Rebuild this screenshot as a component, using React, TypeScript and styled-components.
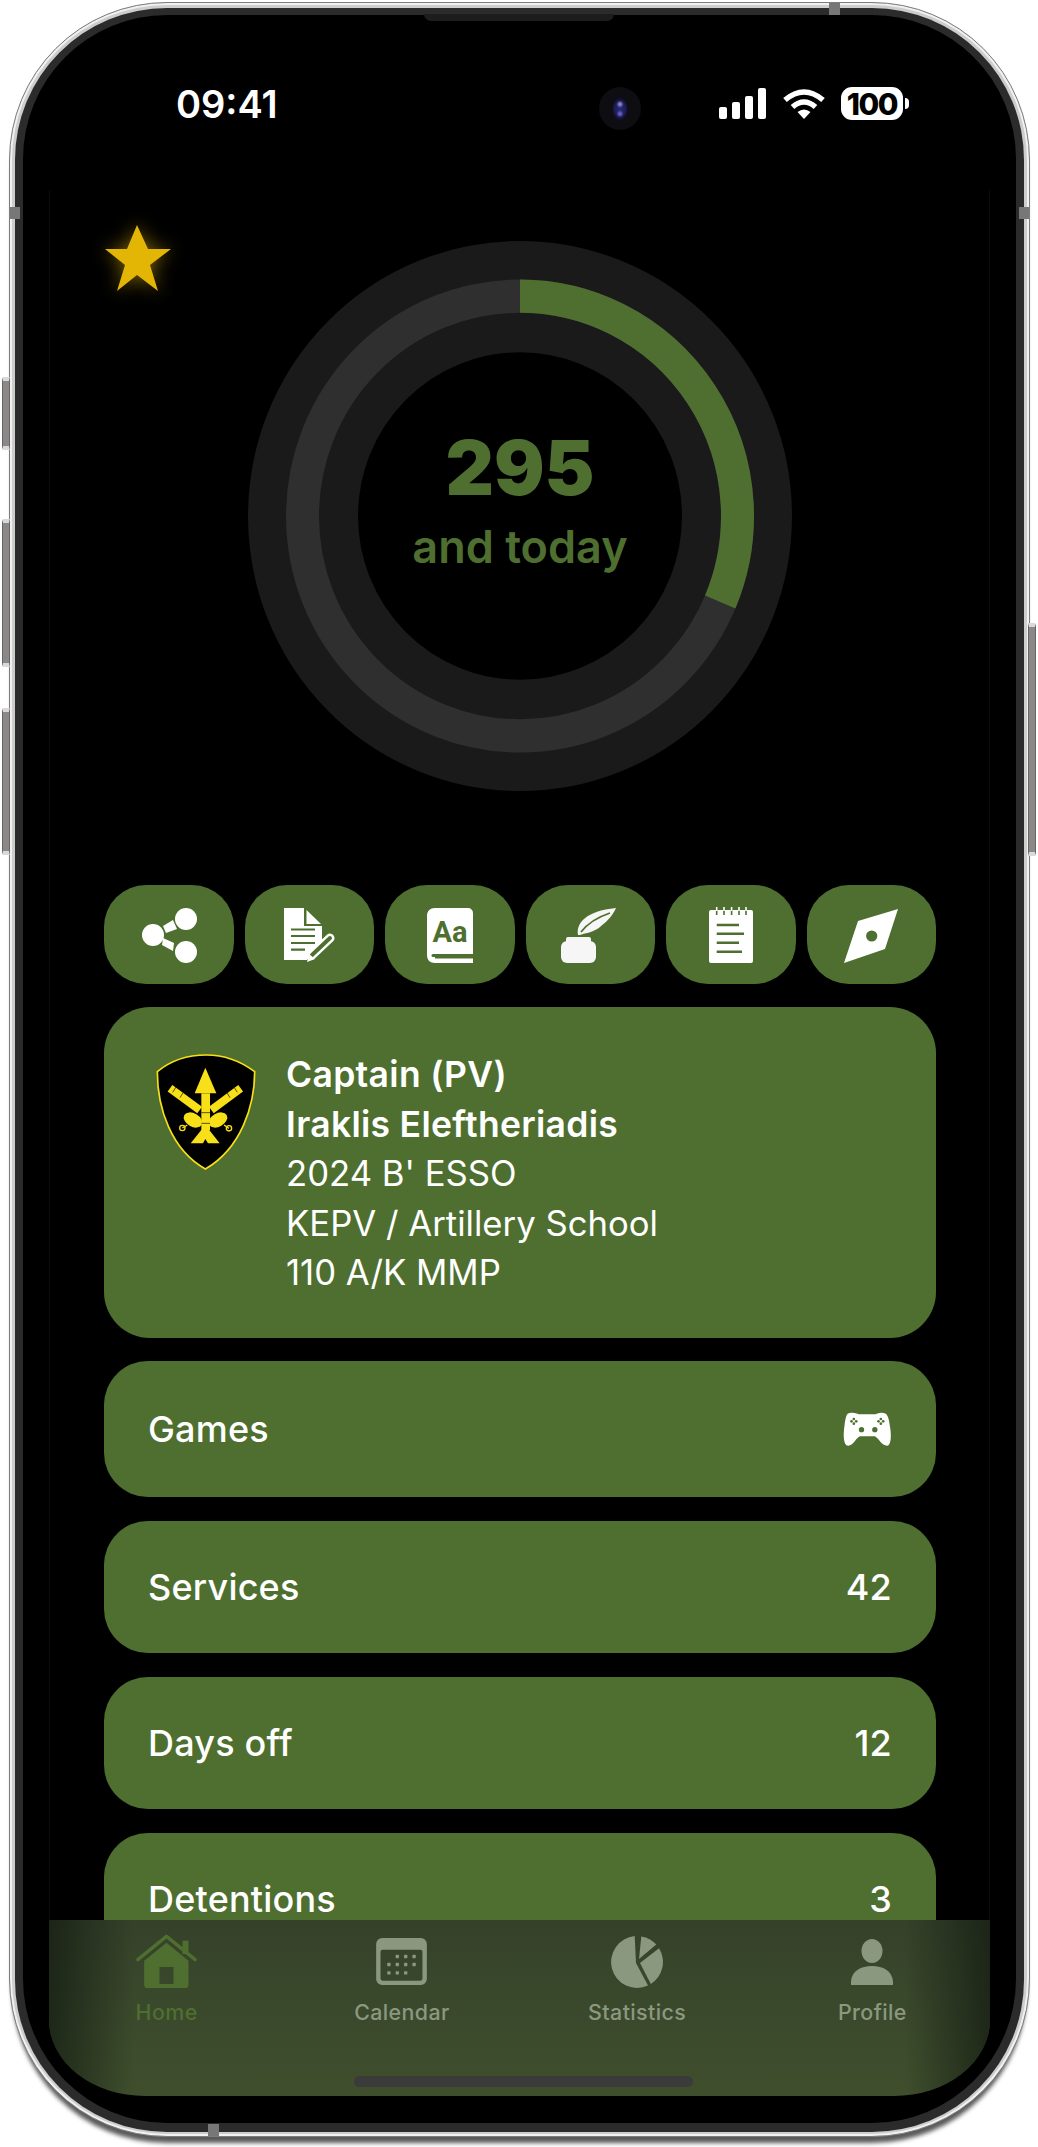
import React from "react";
import styled, { createGlobalStyle } from "styled-components";

const GREEN = "#4e6f2f";
const MUTED = "#8b9880";

const Global = createGlobalStyle`
  html, body { margin: 0; padding: 0; background: #fff; }
  body { font-family: Inter, "Noto Sans", "Liberation Sans", sans-serif; }
  * { box-sizing: border-box; }
`;

const Stage = styled.div`
  width: 1038px;
  height: 2147px;
  padding: 2px 0 0 9px;
  overflow: hidden;
  background: #fff;
`;
const Phone = styled.div`
  position: relative;
  display: flex;
  width: 1021px;
  height: 2135px;
  padding: 5px 5px 4px;
  border-radius: 158px;
  border: 1px solid #7d7d7d;
  background: #cdcdcd;
  box-shadow: inset 0 0 0 2px #f1f1f1, 0 9px 4px -3px rgba(0, 0, 0, 0.65);
`;
const Bezel = styled.div`
  flex: 1;
  display: flex;
  padding: 7px 8px 9px;
  border-radius: 152px;
  background: #2b2b2b;
`;
const Inner = styled.div`
  flex: 1;
  display: flex;
  padding: 0 26px 27px;
  border-radius: 144px;
  background: #000;
`;
const Screen = styled.div`
  position: relative;
  flex: 1;
  min-width: 0;
  display: flex;
  flex-direction: column;
  overflow: hidden;
  border-radius: 0 0 96px 96px / 0 0 76px 76px;
`;
const SideButton = styled.div<{ $top: number; $height: number; $right?: boolean }>`
  position: absolute;
  top: ${(p) => p.$top}px;
  height: ${(p) => p.$height}px;
  width: 8px;
  ${(p) => (p.$right ? "right: -7px;" : "left: -8px;")}
  background: #8c8888;
  border: 1px solid #666;
  border-top: 4px solid #d9d9d9;
  border-bottom: 4px solid #d9d9d9;
  border-radius: ${(p) => (p.$right ? "0 2px 2px 0" : "2px 0 0 2px")};
`;
const Band = styled.div<{ $side: "top" | "bottom" | "left" | "right"; $at: number }>`
  position: absolute;
  background: #777;
  ${(p) =>
    p.$side === "top" || p.$side === "bottom"
      ? `left: ${p.$at}px; width: 11px; height: 12px; ${p.$side}: 0;`
      : `top: ${p.$at}px; height: 12px; width: 10px; ${p.$side}: 0;`}
`;
const Speaker = styled.div`
  position: absolute;
  top: 11px;
  left: 414px;
  width: 190px;
  height: 7px;
  background: #1d1d1d;
  border-radius: 0 0 8px 8px;
`;
const StatusBar = styled.div`
  flex: none;
  height: 175px;
  padding: 70px 87px 0 127px;
  display: flex;
  align-items: flex-start;
  justify-content: space-between;
  color: #fff;
`;
const Time = styled.div`
  font-size: 38px;
  font-weight: 600;
  line-height: 38px;
`;
const StatusIcons = styled.div`
  display: flex;
  align-items: center;
  gap: 16px;
  padding-top: 2px;
`;
const Battery = styled.div`
  position: relative;
  width: 62px;
  height: 33px;
  display: flex;
  align-items: center;
  justify-content: center;
  border-radius: 11px;
  background: #fff;
  color: #000;
  font-size: 30px;
  font-weight: 800;
  letter-spacing: -1.5px;
  &::after {
    content: "";
    position: absolute;
    right: -6px;
    top: 11px;
    width: 4px;
    height: 11px;
    border-radius: 0 4px 4px 0;
    background: #fff;
  }
`;
const Camera = styled.div`
  position: absolute;
  left: 550px;
  top: 72px;
  width: 42px;
  height: 43px;
  border-radius: 50%;
  background: #0e0e12;
  display: flex;
  align-items: center;
  justify-content: center;
  &::after {
    content: "";
    width: 14px;
    height: 22px;
    border-radius: 50%;
    background:
      radial-gradient(circle at 50% 28%, #a59be0 0, rgba(165, 155, 224, 0) 22%),
      radial-gradient(circle at 50% 72%, #7a6fe0 0, rgba(122, 111, 224, 0) 22%),
      radial-gradient(circle, #2a2a78 0, #16164a 60%, #0d0d2a 100%);
  }
`;
const Content = styled.main`
  flex: 1;
  min-height: 0;
  overflow: hidden;
  padding: 0 53px 0 54px;
  border-left: 1px solid #0d0d0d;
  border-right: 1px solid #0d0d0d;
`;
const Hero = styled.section`
  position: relative;
  padding-top: 51px;
  margin-bottom: 94px;
  display: flex;
  justify-content: center;
`;
const Star = styled.svg`
  position: absolute;
  left: 1px;
  top: 35px;
  width: 66px;
  height: 66px;
  filter: drop-shadow(0 0 9px rgba(227, 181, 5, 0.55));
`;
const Dial = styled.div`
  position: relative;
  width: 544px;
  height: 550px;
`;
const DialLabel = styled.div`
  position: absolute;
  inset: 0;
  padding-bottom: 29px;
  display: flex;
  flex-direction: column;
  align-items: center;
  justify-content: center;
  color: ${GREEN};
`;
const DialNumber = styled.div`
  font-size: 75px;
  font-weight: 900;
  line-height: 80px;
`;
const DialCaption = styled.div`
  font-size: 45px;
  font-weight: 600;
  line-height: 56px;
  margin-top: 11px;
`;
const Stack = styled.div`
  display: flex;
  flex-direction: column;
  gap: 23px;
`;
const Actions = styled.div`
  display: grid;
  grid-template-columns: repeat(6, 1fr);
  gap: 11px;
`;
const ActionButton = styled.div`
  height: 99px;
  border-radius: 42px;
  background: ${GREEN};
  display: flex;
  align-items: center;
  justify-content: center;
`;
const IdCard = styled.section`
  height: 331px;
  padding: 43px 44px 0 55px;
  border-radius: 46px;
  background: ${GREEN};
  display: flex;
  gap: 29px;
  color: #fff;
`;
const Shield = styled.svg`
  flex: none;
  width: 120px;
  height: 135px;
  margin: -5px -11px 0 -11px;
`;
const IdLines = styled.div`
  font-size: 34.7px;
  line-height: 49.6px;
  font-weight: 400;
`;
const IdStrong = styled.div`
  font-size: 35.5px;
  font-weight: 600;
  letter-spacing: 0.3px;
`;
const Rows = styled.div`
  display: flex;
  flex-direction: column;
  gap: 24px;
`;
const Row = styled.div<{ $tall?: boolean }>`
  height: ${(p) => (p.$tall ? 136 : 132)}px;
  flex: none;
  padding: 0 44px;
  border-radius: 44px;
  background: ${GREEN};
  color: #fff;
  display: flex;
  align-items: center;
  justify-content: space-between;
  font-size: 36px;
  font-weight: 500;
  letter-spacing: 0.2px;
`;
const TabBar = styled.nav`
  position: absolute;
  left: 0;
  right: 0;
  bottom: 0;
  height: 176px;
  padding-top: 14px;
  display: grid;
  grid-template-columns: repeat(4, 1fr);
  align-items: start;
  background:
    linear-gradient(90deg, rgba(12, 18, 12, 0.62) 0, rgba(12, 18, 12, 0) 9%, rgba(12, 18, 12, 0) 91%, rgba(12, 18, 12, 0.62) 100%),
    linear-gradient(180deg, #35422a 0, #3f4f2d 100%);
`;
const Tab = styled.div<{ $active?: boolean }>`
  display: flex;
  flex-direction: column;
  align-items: center;
  color: ${(p) => (p.$active ? GREEN : MUTED)};
`;
const TabIcon = styled.div`
  height: 55px;
  display: flex;
  align-items: center;
  justify-content: center;
`;
const TabLabel = styled.div`
  margin-top: 10px;
  font-size: 21.4px;
  line-height: 26px;
  font-weight: 500;
  letter-spacing: 0.4px;
`;
const HomeIndicator = styled.div`
  position: absolute;
  left: 305px;
  bottom: 9px;
  width: 339px;
  height: 11px;
  border-radius: 6px;
  background: #3b3b3b;
`;

const ShareIcon = () => (
  <svg width="56" height="56" viewBox="0 0 56 56" fill="#fff">
    <circle cx="12" cy="28" r="11" />
    <circle cx="45" cy="12" r="11" />
    <circle cx="45" cy="45" r="11" />
    <polygon points="22,19 32,13 36,22 25,26" />
    <polygon points="22,31 33,36 32,44 21,38" />
  </svg>
);
const DocIcon = () => (
  <svg width="52" height="56" viewBox="0 0 52 56">
    <path d="M1 1H21V19H39V36L24 53H1Z" fill="#fff" />
    <path d="M23.5 3L38 17H23.5Z" fill="#fff" />
    <path d="M8 22.5H32M8 29H32M8 36H32M8 42.6H22" stroke={GREEN} strokeWidth="2.2" />
    <path d="M29 48L47 31" stroke="#fff" strokeWidth="9" strokeLinecap="round" />
    <path d="M29 48L47 31" stroke={GREEN} strokeWidth="4" strokeLinecap="round" />
    <path d="M24 55L26 47L32 52Z" fill="#fff" />
  </svg>
);
const BookIcon = () => (
  <svg width="46" height="56" viewBox="0 0 46 56">
    <path d="M8 1H41a5 5 0 0 1 5 5V50H8a3 3 0 0 0 0 1.5H46V56H8C3 56 0 53 0 48V9C0 4 3 1 8 1Z" fill="#fff" />
    <path d="M6 48.5H46" stroke={GREEN} strokeWidth="3" strokeLinecap="round" />
    <text x="23" y="35" textAnchor="middle" fontFamily="Roboto" fontWeight="700" fontSize="29" fill={GREEN}>
      Aa
    </text>
  </svg>
);
const InkIcon = () => (
  <svg width="60" height="56" viewBox="0 0 60 56">
    <rect x="1" y="34" width="35" height="22" rx="6" fill="#f6f6f6" />
    <rect x="6" y="30" width="25" height="8" rx="2" fill="#f6f6f6" />
    <path d="M18 28C16 16 26 4 56 1C52 10 46 15 40 20C34 25 26 26 20 28Z" fill="#f6f6f6" />
    <path d="M21 25C28 16 38 10 50 6" stroke={GREEN} strokeWidth="1.8" fill="none" />
  </svg>
);
const NoteIcon = () => (
  <svg width="46" height="56" viewBox="0 0 46 56">
    <rect x="1" y="3" width="44" height="53" rx="2" fill="#fff" />
    <path d="M8.7 2V8M16 2V8M23.6 2V8M31 2V8M38 2V8" stroke={GREEN} strokeWidth="1.6" />
    <path d="M8.7 18H31M8.7 26.7H36M8.7 35.7H31M8.7 44.7H34" stroke={GREEN} strokeWidth="2.6" />
    <path d="M8.7 0V4M16 0V4M23.6 0V4M31 0V4M38 0V4" stroke="#fff" strokeWidth="1.6" />
  </svg>
);
const CompassIcon = () => (
  <svg width="56" height="56" viewBox="0 0 56 56">
    <polygon points="55,2 15,14 1,56 42,42" fill="#fff" />
    <circle cx="28.7" cy="29" r="5.6" fill={GREEN} />
  </svg>
);
const ControllerIcon = () => (
  <svg width="49" height="36" viewBox="40 36 146 108">
    <path
      d="M60 42C50 42 47 55 44 80C40 105 40 140 55 140C70 140 78 118 90 112H135C147 118 155 140 172 140C185 140 185 105 180 80C177 55 172 42 160 42C150 38 142 46 130 46H95C82 46 72 38 60 42Z"
      fill="#fff"
    />
    <g fill={GREEN}>
      <circle cx="95" cy="92" r="8" />
      <circle cx="135" cy="92" r="8" />
      <circle cx="72" cy="60" r="4" />
      <circle cx="72" cy="74" r="4" />
      <circle cx="65" cy="67" r="4" />
      <circle cx="79" cy="67" r="4" />
      <circle cx="153" cy="60" r="4" />
      <circle cx="153" cy="74" r="4" />
      <circle cx="146" cy="67" r="4" />
      <circle cx="160" cy="67" r="4" />
    </g>
  </svg>
);
const HomeIcon = () => (
  <svg width="63" height="55" viewBox="30 28 188 165" fill="currentColor">
    <path d="M38 105L124 35L210 105" fill="none" stroke="currentColor" strokeWidth="10" strokeLinecap="round" strokeLinejoin="round" />
    <rect x="172" y="48" width="18" height="40" />
    <path
      fillRule="evenodd"
      d="M57 108L124 54L190 108V180a10 10 0 0 1-10 10H67a10 10 0 0 1-10-10ZM103 127V178H145V127Z"
    />
  </svg>
);
const CalendarIcon = () => (
  <svg width="51" height="47" viewBox="757 40 151 140" fill="currentColor">
    <path
      fillRule="evenodd"
      d="M775 40H890a18 18 0 0 1 18 18V162a18 18 0 0 1-18 18H775a18 18 0 0 1-18-18V58a18 18 0 0 1 18-18ZM776 75a6 6 0 0 0-6 6V161a6 6 0 0 0 6 6H889a6 6 0 0 0 6-6V81a6 6 0 0 0-6-6Z"
    />
    {[
      [820, 95], [845, 95], [870, 95],
      [795, 119], [820, 119], [845, 119], [870, 119],
      [795, 144], [820, 144], [845, 144],
    ].map(([x, y]) => (
      <rect key={`${x}-${y}`} x={x - 5} y={y - 5} width="10" height="10" rx="2" />
    ))}
  </svg>
);
const PieIcon = () => (
  <svg width="52" height="52" viewBox="-26 -26 52 52" fill="currentColor">
    <path d="M-1 1L11 23.6A26 26 0 1 1 -2.3 -25.9Z" />
    <path d="M2 -3L4.3 -25.6A26 26 0 0 1 19.3 -17.4Z" />
    <path d="M3 1L22 -13.8A26 26 0 0 1 13.8 22Z" />
  </svg>
);
const PersonIcon = () => (
  <svg width="42" height="46" viewBox="0 0 42 46" fill="currentColor">
    <ellipse cx="21" cy="12" rx="10.5" ry="12" />
    <path d="M1 46C-1 46 0 44 0 42C1 32 10 27 21 27C32 27 41 32 42 42C42 44 43 46 41 46Z" />
  </svg>
);

const YELLOW = "#f7e017";

const tabs = [
  { label: "Home", icon: <HomeIcon />, active: true },
  { label: "Calendar", icon: <CalendarIcon /> },
  { label: "Statistics", icon: <PieIcon /> },
  { label: "Profile", icon: <PersonIcon /> },
];

export default function App() {
  const cx = 272;
  const r = 217.5;
  const angle = (113 * Math.PI) / 180;
  const ex = cx + r * Math.sin(angle);
  const ey = cx - r * Math.cos(angle);
  return (
    <Stage>
      <Global />
      <Phone>
        <SideButton $top={374} $height={73} />
        <SideButton $top={516} $height={148} />
        <SideButton $top={705} $height={147} />
        <SideButton $right $top={620} $height={233} />
        <Band $side="top" $at={819} />
        <Band $side="bottom" $at={198} />
        <Band $side="left" $at={204} />
        <Band $side="right" $at={204} />
        <Speaker />
        <Bezel>
          <Inner>
            <Screen>
              <StatusBar>
                <Time>09:41</Time>
                <StatusIcons>
                  <svg width="48" height="31" viewBox="0 0 48 31" fill="#fff">
                    <rect x="0" y="19" width="8" height="12" rx="2" />
                    <rect x="13" y="14" width="8" height="17" rx="2" />
                    <rect x="26" y="8" width="8" height="23" rx="2" />
                    <rect x="39" y="0" width="8" height="31" rx="2" />
                  </svg>
                  <svg width="42" height="30" viewBox="0 0 42 30" fill="none" stroke="#fff" strokeWidth="5.5">
                    <path d="M2 11Q21 -5 40 11" />
                    <path d="M9.5 18Q21 8 32.5 18" />
                    <path d="M14.5 23Q21 18 27.5 23L21 30Z" fill="#fff" stroke="none" />
                  </svg>
                  <Battery>100</Battery>
                </StatusIcons>
              </StatusBar>
              <Camera />
              <Content>
                <Hero>
                  <Star viewBox="0 0 66 66">
                    <polygon
                      points="32,0 43,24 66,24 45,40 53,66 32,50 12,66 20,40 0,24 22,24"
                      fill="#e3b505"
                    />
                  </Star>
                  <Dial>
                    <svg width="544" height="550" viewBox="0 0 544 544" preserveAspectRatio="none">
                      <circle cx={cx} cy={cx} r="217" fill="none" stroke="#1a1a1a" strokeWidth="110" />
                      <circle cx={cx} cy={cx} r={r} fill="none" stroke="#2f2f2f" strokeWidth="33" />
                      <path
                        d={`M${cx} ${cx - r}A${r} ${r} 0 0 1 ${ex} ${ey}`}
                        fill="none"
                        stroke={GREEN}
                        strokeWidth="33"
                      />
                    </svg>
                    <DialLabel>
                      <DialNumber>295</DialNumber>
                      <DialCaption>and today</DialCaption>
                    </DialLabel>
                  </Dial>
                </Hero>
                <Stack>
                  <Actions>
                    <ActionButton><ShareIcon /></ActionButton>
                    <ActionButton><DocIcon /></ActionButton>
                    <ActionButton><BookIcon /></ActionButton>
                    <ActionButton><InkIcon /></ActionButton>
                    <ActionButton><NoteIcon /></ActionButton>
                    <ActionButton><CompassIcon /></ActionButton>
                  </Actions>
                  <IdCard>
                    <Shield viewBox="0 0 360 405">
                      <path
                        d="M28 80C70 45 120 30 175 30C230 30 280 50 320 80C320 180 280 310 172 372C70 315 28 190 28 80Z"
                        fill="#000"
                        stroke={YELLOW}
                        strokeWidth="5"
                      />
                      <g fill={YELLOW}>
                        <path d="M66 130L155 195" stroke={YELLOW} strokeWidth="24" />
                        <path d="M278 130L190 195" stroke={YELLOW} strokeWidth="24" />
                        <ellipse cx="135" cy="225" rx="30" ry="20" transform="rotate(30 135 225)" />
                        <ellipse cx="210" cy="225" rx="30" ry="20" transform="rotate(-30 210 225)" />
                        <path d="M172 68L205 145H140Z" />
                        <rect x="160" y="145" width="26" height="110" />
                        <path d="M172 240L215 295H180L172 282L165 295H128Z" />
                      </g>
                      <circle cx="103" cy="249" r="8" fill="none" stroke={YELLOW} strokeWidth="4" />
                      <circle cx="243" cy="250" r="8" fill="none" stroke={YELLOW} strokeWidth="4" />
                      <path d="M118 240L103 249M228 240L243 250" stroke={YELLOW} strokeWidth="4" />
                      <path
                        d="M160 203H186M160 235H186M84 126L74 142M106 142L96 158M258 126L268 142M236 142L246 158"
                        stroke="#3a3300"
                        strokeWidth="2.5"
                      />
                    </Shield>
                    <IdLines>
                      <IdStrong>Captain (PV)</IdStrong>
                      <IdStrong>Iraklis Eleftheriadis</IdStrong>
                      <div>2024 B' ESSO</div>
                      <div>KEPV / Artillery School</div>
                      <div>110 A/K MMP</div>
                    </IdLines>
                  </IdCard>
                  <Rows>
                    <Row $tall>
                      <span>Games</span>
                      <ControllerIcon />
                    </Row>
                    <Row>
                      <span>Services</span>
                      <span>42</span>
                    </Row>
                    <Row>
                      <span>Days off</span>
                      <span>12</span>
                    </Row>
                    <Row>
                      <span>Detentions</span>
                      <span>3</span>
                    </Row>
                  </Rows>
                </Stack>
              </Content>
              <TabBar>
                {tabs.map((t) => (
                  <Tab key={t.label} $active={t.active}>
                    <TabIcon>{t.icon}</TabIcon>
                    <TabLabel>{t.label}</TabLabel>
                  </Tab>
                ))}
                <HomeIndicator />
              </TabBar>
            </Screen>
          </Inner>
        </Bezel>
      </Phone>
    </Stage>
  );
}
